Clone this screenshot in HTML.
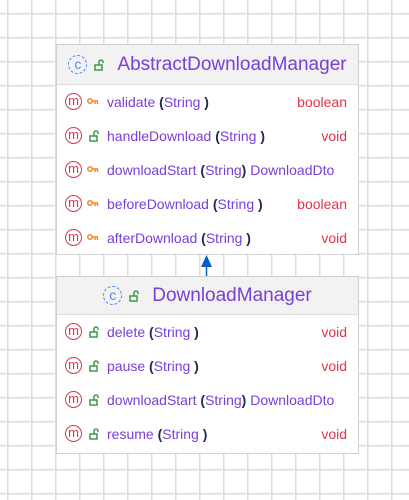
<!DOCTYPE html>
<html><head><style>
body{margin:0;width:409px;height:500px;overflow:hidden;background:#fff;
background-image:linear-gradient(#dcdcdc 1.5px,transparent 1.5px),linear-gradient(90deg,#dcdcdc 1.5px,transparent 1.5px);
background-size:24px 24px;background-position:7px 13px;font-family:"Liberation Sans",sans-serif;position:relative}
.box{position:absolute;left:56px;width:301px;background:#fff;border:1px solid #d0d0d0}
.hd{background:#f2f2f2;border-bottom:1px solid #ddd;display:flex;align-items:center;justify-content:center;color:#7a3fd6;font-size:19px}
.row{position:relative;height:34px;font-size:14px;color:#7a3fd6}
.row span{position:absolute;top:8px}
.m{position:absolute;left:8px;top:7px;width:15px;height:15px;border:1.4px solid #e0344a;border-radius:50%;color:#e0344a;font-size:13px;line-height:14px;text-align:center}
.ret{right:11px;color:#e0344a}
.p{color:#1c2a55;font-weight:bold}
.c{width:17px;height:17px;border:1.6px dashed #4a8af0;border-radius:50%;color:#4a8af0;font-size:14px;line-height:17px;text-align:center;margin-right:6px}
svg.lk{position:absolute;left:31px;top:10px}
svg.key{position:absolute;left:30px;top:12px}
</style></head><body>
<div class="box" style="top:44px;height:209px">
<div class="hd" style="height:39px"><div class="c">c</div><svg width="12" height="12" style="margin-right:12px"><path d="M2 6h7v5H2z M6 6V3a2 2 0 0 1 4 0v1" fill="none" stroke="#3a9a4a" stroke-width="1.5"/></svg>AbstractDownloadManager</div>
<div class="row" style="margin-top:1px"><div class="m">m</div><svg class="key" width="12" height="8"><circle cx="3" cy="3" r="2.2" fill="none" stroke="#f08a24" stroke-width="1.5"/><path d="M5 3h6M8 3v3M10.5 3v3" stroke="#f08a24" stroke-width="1.5"/></svg><span style="left:50px">validate <span class="p" style="position:static">(</span>String<span class="p" style="position:static"> )</span></span><span class="ret">boolean</span></div>
<div class="row"><div class="m">m</div><svg class="lk" width="12" height="12"><path d="M2 6h7v5H2z M6 6V3a2 2 0 0 1 4 0v1" fill="none" stroke="#3a9a4a" stroke-width="1.5"/></svg><span style="left:50px">handleDownload <span class="p" style="position:static">(</span>String<span class="p" style="position:static"> )</span></span><span class="ret">void</span></div>
<div class="row"><div class="m">m</div><svg class="key" width="12" height="8"><circle cx="3" cy="3" r="2.2" fill="none" stroke="#f08a24" stroke-width="1.5"/><path d="M5 3h6M8 3v3M10.5 3v3" stroke="#f08a24" stroke-width="1.5"/></svg><span style="left:50px">downloadStart <span class="p" style="position:static">(</span>String<span class="p" style="position:static">)</span> DownloadDto</span></div>
<div class="row"><div class="m">m</div><svg class="key" width="12" height="8"><circle cx="3" cy="3" r="2.2" fill="none" stroke="#f08a24" stroke-width="1.5"/><path d="M5 3h6M8 3v3M10.5 3v3" stroke="#f08a24" stroke-width="1.5"/></svg><span style="left:50px">beforeDownload <span class="p" style="position:static">(</span>String<span class="p" style="position:static"> )</span></span><span class="ret">boolean</span></div>
<div class="row"><div class="m">m</div><svg class="key" width="12" height="8"><circle cx="3" cy="3" r="2.2" fill="none" stroke="#f08a24" stroke-width="1.5"/><path d="M5 3h6M8 3v3M10.5 3v3" stroke="#f08a24" stroke-width="1.5"/></svg><span style="left:50px">afterDownload <span class="p" style="position:static">(</span>String<span class="p" style="position:static"> )</span></span><span class="ret">void</span></div>
</div>
<svg style="position:absolute;left:199px;top:253px" width="15" height="24"><path d="M7.5 2 L13 14 L2 14 Z" fill="#0a5bc4"/><line x1="7.5" y1="13" x2="7.5" y2="24" stroke="#0a5bc4" stroke-width="1.5"/></svg>
<div class="box" style="top:276px;height:176px">
<div class="hd" style="height:37px"><div class="c">c</div><svg width="12" height="12" style="margin-right:12px"><path d="M2 6h7v5H2z M6 6V3a2 2 0 0 1 4 0v1" fill="none" stroke="#3a9a4a" stroke-width="1.5"/></svg>DownloadManager</div>
<div class="row" style="margin-top:1px"><div class="m">m</div><svg class="lk" width="12" height="12"><path d="M2 6h7v5H2z M6 6V3a2 2 0 0 1 4 0v1" fill="none" stroke="#3a9a4a" stroke-width="1.5"/></svg><span style="left:50px">delete <span class="p" style="position:static">(</span>String<span class="p" style="position:static"> )</span></span><span class="ret">void</span></div>
<div class="row"><div class="m">m</div><svg class="lk" width="12" height="12"><path d="M2 6h7v5H2z M6 6V3a2 2 0 0 1 4 0v1" fill="none" stroke="#3a9a4a" stroke-width="1.5"/></svg><span style="left:50px">pause <span class="p" style="position:static">(</span>String<span class="p" style="position:static"> )</span></span><span class="ret">void</span></div>
<div class="row"><div class="m">m</div><svg class="lk" width="12" height="12"><path d="M2 6h7v5H2z M6 6V3a2 2 0 0 1 4 0v1" fill="none" stroke="#3a9a4a" stroke-width="1.5"/></svg><span style="left:50px">downloadStart <span class="p" style="position:static">(</span>String<span class="p" style="position:static">)</span> DownloadDto</span></div>
<div class="row"><div class="m">m</div><svg class="lk" width="12" height="12"><path d="M2 6h7v5H2z M6 6V3a2 2 0 0 1 4 0v1" fill="none" stroke="#3a9a4a" stroke-width="1.5"/></svg><span style="left:50px">resume <span class="p" style="position:static">(</span>String<span class="p" style="position:static"> )</span></span><span class="ret">void</span></div>
</div>
</body></html>
